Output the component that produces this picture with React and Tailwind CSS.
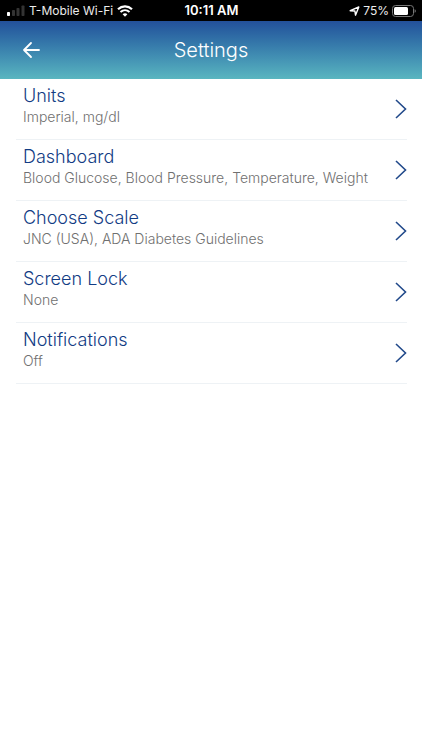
const settings = [
  { title: 'Units', value: 'Imperial, mg/dl' },
  { title: 'Dashboard', value: 'Blood Glucose, Blood Pressure, Temperature, Weight' },
  { title: 'Choose Scale', value: 'JNC (USA), ADA Diabetes Guidelines' },
  { title: 'Screen Lock', value: 'None' },
  { title: 'Notifications', value: 'Off' },
];

function StatusBar() {
  return (
    <div className="grid h-[21px] grid-cols-[1fr_auto_1fr] items-center bg-black pr-1.5 pl-[7px] text-xs text-[#ececec]">
      <div className="flex items-center gap-1">
        <svg width="18" height="12" viewBox="0 0 18 12" aria-hidden="true">
          <rect x="0" y="7" width="3" height="4" rx="0.8" fill="#fff" />
          <rect x="5" y="5" width="3" height="6" rx="0.8" fill="#333" />
          <rect x="9.5" y="3" width="3" height="8" rx="0.8" fill="#333" />
          <rect x="14.5" y="0.5" width="3" height="10.5" rx="0.8" fill="#333" />
        </svg>
        <span>T-Mobile Wi-Fi</span>
        <svg width="16" height="12" viewBox="0 0 16 12" aria-hidden="true">
          <path d="M1 4.3C5 0.5 11 0.5 15 4.3" fill="none" stroke="#fff" strokeWidth="2.2" />
          <path d="M3.5 7C6.2 4.5 9.8 4.5 12.5 7" fill="none" stroke="#fff" strokeWidth="2" />
          <path d="M5.6 9.2C7 7.9 9 7.9 10.4 9.2L8 11.7Z" fill="#fff" />
        </svg>
      </div>
      <span className="text-[13px] font-semibold text-white">10:11 AM</span>
      <div className="flex items-center justify-end gap-[3px]">
        <svg width="11" height="10" viewBox="0 0 11 10" aria-hidden="true">
          <path d="M1.2 4.7L9.8 1L6.5 9.2L5.9 5Z" fill="none" stroke="#fff" strokeWidth="1.4" strokeLinejoin="round" />
        </svg>
        <span>75%</span>
        <svg width="24" height="12" viewBox="0 0 24 12" aria-hidden="true">
          <rect x="0.5" y="0.5" width="21" height="11" rx="3" fill="none" stroke="#777" />
          <rect x="2" y="2" width="14" height="8" rx="1.5" fill="#fff" />
          <path d="M22.6 4.2C24.2 4.8 24.2 7.2 22.6 7.8Z" fill="#777" />
        </svg>
      </div>
    </div>
  );
}

function Header() {
  return (
    <header className="grid h-[58px] grid-cols-[1fr_auto_1fr] items-center bg-linear-to-b from-[#23509a] to-[#5ab6c0] px-[22px]">
      <button type="button" aria-label="Back" className="w-5">
        <svg width="19" height="18" viewBox="0 0 19 18" fill="none" stroke="#fff" strokeWidth="1.8" strokeLinecap="round" strokeLinejoin="round" aria-hidden="true">
          <path d="M17 9H2M9 2L2 9L9 16" />
        </svg>
      </button>
      <h1 className="text-xl font-light text-white">Settings</h1>
    </header>
  );
}

function SettingRow({ title, value }) {
  return (
    <li className="border-b border-[#eef2f5]">
      <button type="button" className="flex h-[60px] w-full items-center justify-between pl-[7px] text-left">
        <span className="flex flex-col pb-1.5">
          <span className="text-lg leading-[22px] font-light text-[#123c84]">{title}</span>
          <span className="text-sm leading-5 font-light text-[#707070]">{value}</span>
        </span>
        <svg width="12" height="20" viewBox="0 0 12 20" fill="none" stroke="#21498a" strokeWidth="1.6" aria-hidden="true">
          <path d="M1 1L10.5 10L1 19" />
        </svg>
      </button>
    </li>
  );
}

export default function App() {
  return (
    <div className="min-h-screen bg-white font-['Inter',sans-serif]">
      <StatusBar />
      <Header />
      <main>
        <ul className="mr-[15px] ml-4">
          {settings.map((item) => (
            <SettingRow key={item.title} title={item.title} value={item.value} />
          ))}
        </ul>
      </main>
    </div>
  );
}
